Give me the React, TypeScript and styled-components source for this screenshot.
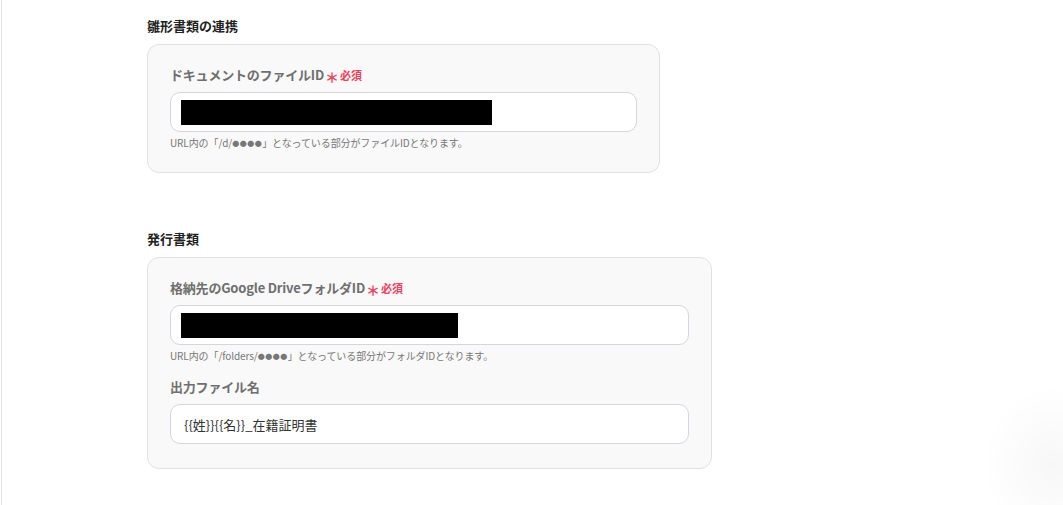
import React from "react";
import styled, { createGlobalStyle } from "styled-components";

const GlobalStyle = createGlobalStyle`
  html, body { margin: 0; padding: 0; background: #ffffff; }
  body {
    font-family: "Noto Sans CJK JP", "Noto Sans", "Liberation Sans", sans-serif;
    color: #222;
    overflow: hidden;
  }
`;

const Page = styled.div`
  height: 100vh;
  margin-left: 1px;
  border-left: 1px solid #e2e2e2;
  box-sizing: border-box;
  padding: 16px 0 0 145px;
  display: flex;
  flex-direction: column;
`;

const Section = styled.section<{ $top?: number }>`
  display: flex;
  flex-direction: column;
  margin-top: ${(p) => p.$top ?? 0}px;
`;

const Heading = styled.h2`
  margin: 0 0 8px;
  font-size: 13px;
  line-height: 20px;
  font-weight: 700;
  color: #222;
`;

const Card = styled.div<{ $width: number; $pb?: number }>`
  width: ${(p) => p.$width}px;
  box-sizing: border-box;
  background: #f9f9f9;
  border: 1px solid #e1e1e4;
  border-radius: 12px;
  padding: 20px 22px ${(p) => p.$pb ?? 22}px;
  display: flex;
  flex-direction: column;
`;

const Label = styled.div<{ $gap?: number }>`
  display: flex;
  align-items: center;
  font-size: 13px;
  line-height: 20px;
  font-weight: 700;
  color: #6f6f6f;
  letter-spacing: -0.2px;
  margin-top: ${(p) => p.$gap ?? 0}px;
`;

const Required = styled.span`
  display: inline-flex;
  align-items: center;
  margin-left: 1px;
  color: #f2405d;
  font-weight: 700;
  letter-spacing: 0;
`;

const Star = styled.span`
  font-size: 14px;
  margin-right: 1px;
  position: relative;
  top: 2px;
`;

const Must = styled.span`
  font-size: 11px;
`;

const Field = styled.div`
  margin-top: 7px;
  height: 40px;
  box-sizing: border-box;
  background: #ffffff;
  border: 1px solid #d3d6de;
  border-radius: 10px;
  padding: 0 13px 0 10px;
  display: flex;
  align-items: center;
  font-size: 13px;
  color: #333;
`;

const Redacted = styled.div<{ $w: number }>`
  width: ${(p) => p.$w}px;
  height: 25px;
  background: #000;
`;

const Value = styled.span`
  padding-left: 3px;
`;

const Help = styled.div`
  margin-top: 4px;
  font-size: 10px;
  line-height: 14px;
  color: #777;
  letter-spacing: -0.1px;
`;

const Dots = styled.span`
  font-size: 7px;
  letter-spacing: 0.5px;
  vertical-align: 1px;
`;

const CornerGlow = styled.div`
  position: fixed;
  right: -60px;
  bottom: -40px;
  width: 140px;
  height: 160px;
  border-radius: 50%;
  background: radial-gradient(closest-side, rgba(0,0,0,0.03), rgba(0,0,0,0));
  pointer-events: none;
`;

const RequiredMark = () => (
  <Required>
    <Star>＊</Star>
    <Must>必須</Must>
  </Required>
);

export default function App() {
  return (
    <>
      <GlobalStyle />
      <Page>
        <Section>
          <Heading>雛形書類の連携</Heading>
          <Card $width={513}>
            <Label>
              ドキュメントのファイルID
              <RequiredMark />
            </Label>
            <Field>
              <Redacted $w={311} />
            </Field>
            <Help>
              URL内の「/d/<Dots>●●●●</Dots>」となっている部分がファイルIDとなります。
            </Help>
          </Card>
        </Section>
        <Section $top={56}>
          <Heading>発行書類</Heading>
          <Card $width={565} $pb={24}>
            <Label>
              格納先のGoogle DriveフォルダID
              <RequiredMark />
            </Label>
            <Field>
              <Redacted $w={277} />
            </Field>
            <Help>
              URL内の「/folders/<Dots>●●●●</Dots>」となっている部分がフォルダIDとなります。
            </Help>
            <Label $gap={14}>出力ファイル名</Label>
            <Field>
              <Value>{"{{姓}}{{名}}_在籍証明書"}</Value>
            </Field>
          </Card>
        </Section>
      </Page>
      <CornerGlow />
    </>
  );
}
